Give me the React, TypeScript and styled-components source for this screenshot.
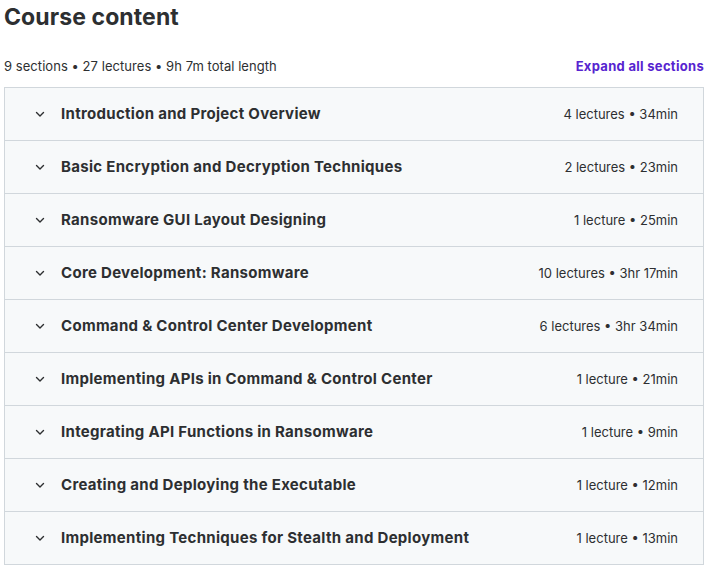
import styled, { createGlobalStyle } from "styled-components";

const GlobalStyle = createGlobalStyle`
    body {
        margin: 0;
        background: #ffffff;
        font-family: "Inter", "Noto Sans", sans-serif;
        color: #2d2f31;
    }
`;

const Page = styled.div`
    width: 709px;
    padding: 0 5px 0 4px;
    box-sizing: border-box;
`;

const Title = styled.h2`
    margin: 0;
    padding-top: 3px;
    font-size: 23px;
    font-weight: 700;
    line-height: 28px;
    letter-spacing: 0.1px;
`;

const MetaRow = styled.div`
    display: flex;
    align-items: center;
    justify-content: space-between;
    margin-top: 26px;
    height: 18px;
    margin-bottom: 12px;
`;

const MetaText = styled.span`
    font-size: 13px;
    letter-spacing: 0.05px;
    color: #2d2f31;
`;

const ExpandLink = styled.button`
    border: none;
    background: none;
    padding: 0;
    font-family: inherit;
    font-size: 13px;
    font-weight: 700;
    letter-spacing: 0.3px;
    color: #5624d0;
    cursor: pointer;
`;

const Accordion = styled.div`
    border: 1px solid #d1d7dc;
    border-bottom: none;
`;

const SectionRow = styled.div`
    display: flex;
    align-items: center;
    height: 52px;
    padding: 0 25px 0 28px;
    background: #f7f9fa;
    border-bottom: 1px solid #d1d7dc;
`;

const Chevron = styled.svg`
    width: 14px;
    height: 14px;
    flex-shrink: 0;
    margin-right: 14px;
`;

const SectionTitle = styled.span`
    flex: 1;
    font-size: 15px;
    font-weight: 700;
    letter-spacing: 0.3px;
    color: #2d2f31;
    line-height: 20px;
`;

const SectionMeta = styled.span`
    font-size: 13px;
    color: #2d2f31;
    line-height: 18px;
`;

const sections = [
    { title: "Introduction and Project Overview", meta: "4 lectures • 34min" },
    { title: "Basic Encryption and Decryption Techniques", meta: "2 lectures • 23min" },
    { title: "Ransomware GUI Layout Designing", meta: "1 lecture • 25min" },
    { title: "Core Development: Ransomware", meta: "10 lectures • 3hr 17min" },
    { title: "Command & Control Center Development", meta: "6 lectures • 3hr 34min" },
    { title: "Implementing APIs in Command & Control Center", meta: "1 lecture • 21min" },
    { title: "Integrating API Functions in Ransomware", meta: "1 lecture • 9min" },
    { title: "Creating and Deploying the Executable", meta: "1 lecture • 12min" },
    { title: "Implementing Techniques for Stealth and Deployment", meta: "1 lecture • 13min" },
];

const App = () => {
    return (
        <Page>
            <GlobalStyle />
            <Title>Course content</Title>
            <MetaRow>
                <MetaText>9 sections • 27 lectures • 9h 7m total length</MetaText>
                <ExpandLink>Expand all sections</ExpandLink>
            </MetaRow>
            <Accordion>
                {sections.map((s) => (
                    <SectionRow key={s.title}>
                        <Chevron viewBox="0 0 14 14">
                            <path d="M3.5 5.5 L7 9 L10.5 5.5" fill="none" stroke="#2d2f31" strokeWidth="1.4" strokeLinecap="round" strokeLinejoin="round" />
                        </Chevron>
                        <SectionTitle>{s.title}</SectionTitle>
                        <SectionMeta>{s.meta}</SectionMeta>
                    </SectionRow>
                ))}
            </Accordion>
        </Page>
    );
};

export default App;
